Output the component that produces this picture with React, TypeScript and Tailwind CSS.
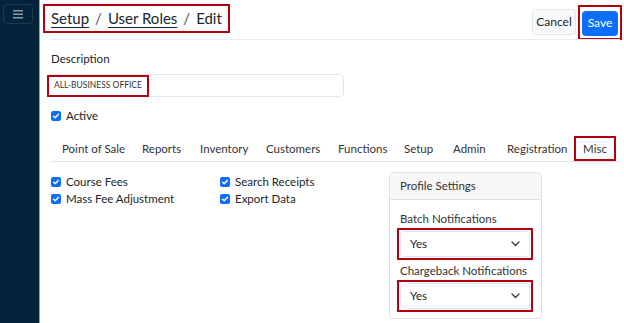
import React from "react";

const Check = ({ label }: { label: string }) => (
  <label className="flex items-center gap-[5px] h-[17px] whitespace-nowrap">
    <span className="w-[10px] h-[10px] shrink-0 rounded-[2px] bg-[#0d6efd] flex items-center justify-center">
      <svg width="8" height="8" viewBox="0 0 8 8" fill="none">
        <path d="M1.5 4.2 L3.2 5.8 L6.5 2.3" stroke="white" strokeWidth="1.4" strokeLinecap="round" strokeLinejoin="round" />
      </svg>
    </span>
    <span>{label}</span>
  </label>
);

const SelectBox = ({ value }: { value: string }) => (
  <div className="border-2 border-[#b1000f] p-[1px] w-[136px]">
    <div className="h-[26px] border border-[#e3e6ea] rounded-[4px] flex items-center justify-between pl-[9px] pr-[9px] text-[11.5px] text-[#212529]">
      <span>{value}</span>
      <svg width="9" height="6" viewBox="0 0 9 6" fill="none">
        <path d="M1 1 L4.5 4.5 L8 1" stroke="#343a40" strokeWidth="1.3" strokeLinecap="round" strokeLinejoin="round" />
      </svg>
    </div>
  </div>
);

const tabs = [
  { t: "Point of Sale", w: "w-[80px]" },
  { t: "Reports", w: "w-[58px]" },
  { t: "Inventory", w: "w-[66px]" },
  { t: "Customers", w: "w-[72px]" },
  { t: "Functions", w: "w-[66px]" },
  { t: "Setup", w: "w-[49px]" },
  { t: "Admin", w: "w-[54px]" },
  { t: "Registration", w: "w-[78px]" },
];

export default function App() {
  return (
    <div className="flex h-[323px] w-[624px] overflow-hidden bg-white text-[#212529]" style={{ fontFamily: "Lato, 'Open Sans', sans-serif" }}>
      {/* sidebar */}
      <div className="w-[40px] shrink-0 bg-[#03243a] border-r border-[#9aa3aa] pt-[4px] pl-[3px]">
        <div className="w-[30px] h-[20px] rounded-[4px] border border-[#1d3a4e] flex items-center justify-center">
          <svg width="10" height="9" viewBox="0 0 10 9">
            <rect x="0" y="0" width="10" height="1.5" fill="#8c9aa5" />
            <rect x="0" y="3.5" width="10" height="1.5" fill="#8c9aa5" />
            <rect x="0" y="7" width="10" height="1.5" fill="#8c9aa5" />
          </svg>
        </div>
      </div>

      <div className="flex-1 min-w-0 flex flex-col">
        {/* header */}
        <div className="h-[39px] flex items-start justify-between pt-[4px] pl-[3px] pr-[2px]">
          <div className="border-2 border-[#b1000f] h-[29px] px-[6px] flex items-center text-[15px] leading-none whitespace-nowrap">
            <span className="underline decoration-1 underline-offset-[3px]">Setup</span>
            <span className="mx-[6px] text-[#555]">/</span>
            <span className="underline decoration-1 underline-offset-[3px]">User Roles</span>
            <span className="mx-[6px] text-[#555]">/</span>
            <span>Edit</span>
          </div>
          <div className="flex items-start gap-[2px]">
            <button className="mt-[5px] h-[26px] w-[44px] rounded-[4px] bg-[#f8f9fa] border border-[#e3e6ea] text-[12px] text-[#212529]">Cancel</button>
            <div className="mt-[1px] border-2 border-[#b1000f] p-[2px]">
              <button className="h-[25px] w-[36px] rounded-[4px] bg-[#0d6efd] text-white text-[12px]">Save</button>
            </div>
          </div>
        </div>
        <div className="ml-[10px] mr-[4px] border-b border-[#e9ecef]" />

        {/* description */}
        <div className="pl-[7px] pt-[10px] text-[11.5px]">
          <div className="pl-[4px] h-[17px] leading-[17px]">Description</div>
          <div className="mt-[7px] w-[297px] h-[23px] border border-[#e3e6ea] rounded-[4px] flex items-center">
            <span className="border-2 border-[#b1000f] h-[22px] flex items-center px-[5px] text-[8.5px] text-[#333] -ml-[1px] whitespace-nowrap">ALL-BUSINESS OFFICE</span>
          </div>
          <div className="pl-[4px] mt-[10px]">
            <Check label="Active" />
          </div>
        </div>

        {/* tabs */}
        <div className="ml-[11px] mr-[4px] mt-[12px] border-b border-[#dee2e6] flex items-end text-[11.5px] text-[#333]">
          {tabs.map((x) => (
            <div key={x.t} className={`${x.w} pl-[11px] h-[25px] flex items-center whitespace-nowrap shrink-0`}>{x.t}</div>
          ))}
          <div className="w-[42px] border-2 border-[#b1000f] h-[25px] flex items-center justify-center shrink-0">Misc</div>
        </div>

        {/* body */}
        <div className="flex pl-[11px] pt-[10px] text-[11.5px]">
          <div className="w-[169px] pt-[1px]">
            <Check label="Course Fees" />
            <Check label="Mass Fee Adjustment" />
          </div>
          <div className="w-[169px] pt-[1px]">
            <Check label="Search Receipts" />
            <Check label="Export Data" />
          </div>
          <div className="w-[153px] h-[147px] border border-[#dfe2e5] rounded-[4px] overflow-hidden">
            <div className="h-[27px] bg-[#f7f7f7] border-b border-[#dfe2e5] flex items-center pl-[10px] text-[#333]">Profile Settings</div>
            <div className="pl-[7px] pt-[10px]">
              <div className="pl-[3px] h-[17px] leading-[17px] text-[#333]">Batch Notifications</div>
              <div className="mt-[1px]">
                <SelectBox value="Yes" />
              </div>
              <div className="pl-[3px] mt-[2px] h-[17px] leading-[17px] text-[#333] whitespace-nowrap">Chargeback Notifications</div>
              <div className="mt-[1px]">
                <SelectBox value="Yes" />
              </div>
            </div>
          </div>
        </div>
      </div>
    </div>
  );
}
